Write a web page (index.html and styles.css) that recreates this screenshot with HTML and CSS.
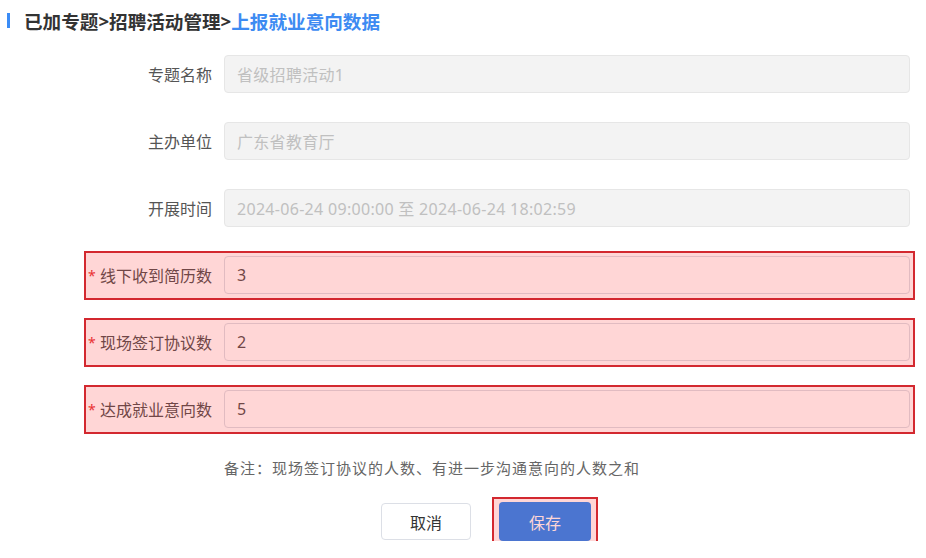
FILE: index.html
```html
<!DOCTYPE html>
<html lang="zh-CN">
<head>
    <meta charset="UTF-8">
    <meta name="viewport" content="width=device-width, initial-scale=1.0">
    <title>上报就业意向数据</title>
    <link rel="stylesheet" href="styles.css">
</head>
<body>
    <div class="page">
        <h2 class="crumbs">
            <span class="crumb">已加专题</span>&gt;<span class="crumb">招聘活动管理</span>&gt;<span class="crumb current">上报就业意向数据</span>
        </h2>

        <form class="form" id="report-form">
            <div class="form-item">
                <label class="form-label">专题名称</label>
                <input class="form-input" type="text" value="省级招聘活动1" disabled>
            </div>
            <div class="form-item">
                <label class="form-label">主办单位</label>
                <input class="form-input" type="text" value="广东省教育厅" disabled>
            </div>
            <div class="form-item">
                <label class="form-label">开展时间</label>
                <input class="form-input" type="text" value="2024-06-24 09:00:00 至 2024-06-24 18:02:59" disabled>
            </div>
            <div class="form-item required marked">
                <label class="form-label">线下收到简历数</label>
                <input class="form-input" type="text" value="3">
            </div>
            <div class="form-item required marked">
                <label class="form-label">现场签订协议数</label>
                <input class="form-input" type="text" value="2">
            </div>
            <div class="form-item required marked">
                <label class="form-label">达成就业意向数</label>
                <input class="form-input" type="text" value="5">
            </div>

            <p class="remark">备注：现场签订协议的人数、有进一步沟通意向的人数之和</p>

            <div class="actions">
                <button type="button" class="btn">取消</button>
                <span class="marked btn-wrap">
                    <button type="submit" class="btn btn-primary">保存</button>
                </span>
            </div>
        </form>
    </div>
</body>
</html>
```

FILE: styles.css
```css
body {
    margin: 0;
    font-family: "Noto Sans", "Noto Sans CJK SC", sans-serif;
    background-color: #fff;
    color: #555;
}

.page {
    width: 926px;
}

.crumbs {
    display: flex;
    align-items: center;
    margin: 0;
    height: 40px;
    padding-left: 7px;
    font-size: 18.6px;
    font-weight: bold;
    color: #333;
}

.crumbs::before {
    content: "";
    width: 3px;
    height: 15px;
    margin-right: 14px;
    background-color: #3b8cf6;
}

.crumb.current {
    color: #3d8bf2;
}

.form {
    width: 826px;
    margin: 15px 0 0 84px;
}

.form-item {
    position: relative;
    display: flex;
    align-items: center;
    height: 38px;
    margin-bottom: 29px;
}

.form-label {
    width: 140px;
    padding-right: 12px;
    box-sizing: border-box;
    text-align: right;
    font-size: 16px;
    color: #555;
}

.required .form-label::before {
    content: "*";
    position: absolute;
    left: 4px;
    top: 10px;
    color: #e63c3c;
    font-size: 14px;
}

.form-input {
    flex: 1;
    min-width: 0;
    height: 38px;
    box-sizing: border-box;
    padding: 0 12px;
    border: 1px solid #dcdfe6;
    border-radius: 4px;
    font-family: inherit;
    font-size: 16px;
    letter-spacing: 0.3px;
    color: #555;
    background-color: #fff;
}

.form-input:disabled {
    background-color: #f3f3f3;
    border-color: #e6e6e6;
    color: #c0c0c0;
}

/* review marks drawn over the items */
.marked::after {
    content: "";
    position: absolute;
    top: -5px;
    bottom: -6px;
    left: 0;
    right: -5px;
    border: 2px solid #d3282f;
    background-color: rgba(255, 0, 0, 0.16);
    pointer-events: none;
}

.remark {
    margin: 0 0 0 140px;
    font-size: 15px;
    color: #666;
    letter-spacing: 1px;
}

.actions {
    display: flex;
    align-items: center;
    margin: 24px 0 0 297px;
}

.btn {
    width: 90px;
    height: 37px;
    border: 1px solid #dcdfe6;
    border-radius: 4px;
    background-color: #fff;
    color: #333;
    font-family: inherit;
    font-size: 16px;
    cursor: pointer;
}

.btn-wrap {
    position: relative;
    display: inline-block;
    margin-left: 28px;
    height: 39px;
}

.btn-wrap::after {
    top: -5px;
    bottom: -5px;
    left: -7px;
    right: -7px;
}

.btn-primary {
    width: 92px;
    height: 39px;
    border: none;
    background-color: #298cf8;
    color: #fff;
}
```
